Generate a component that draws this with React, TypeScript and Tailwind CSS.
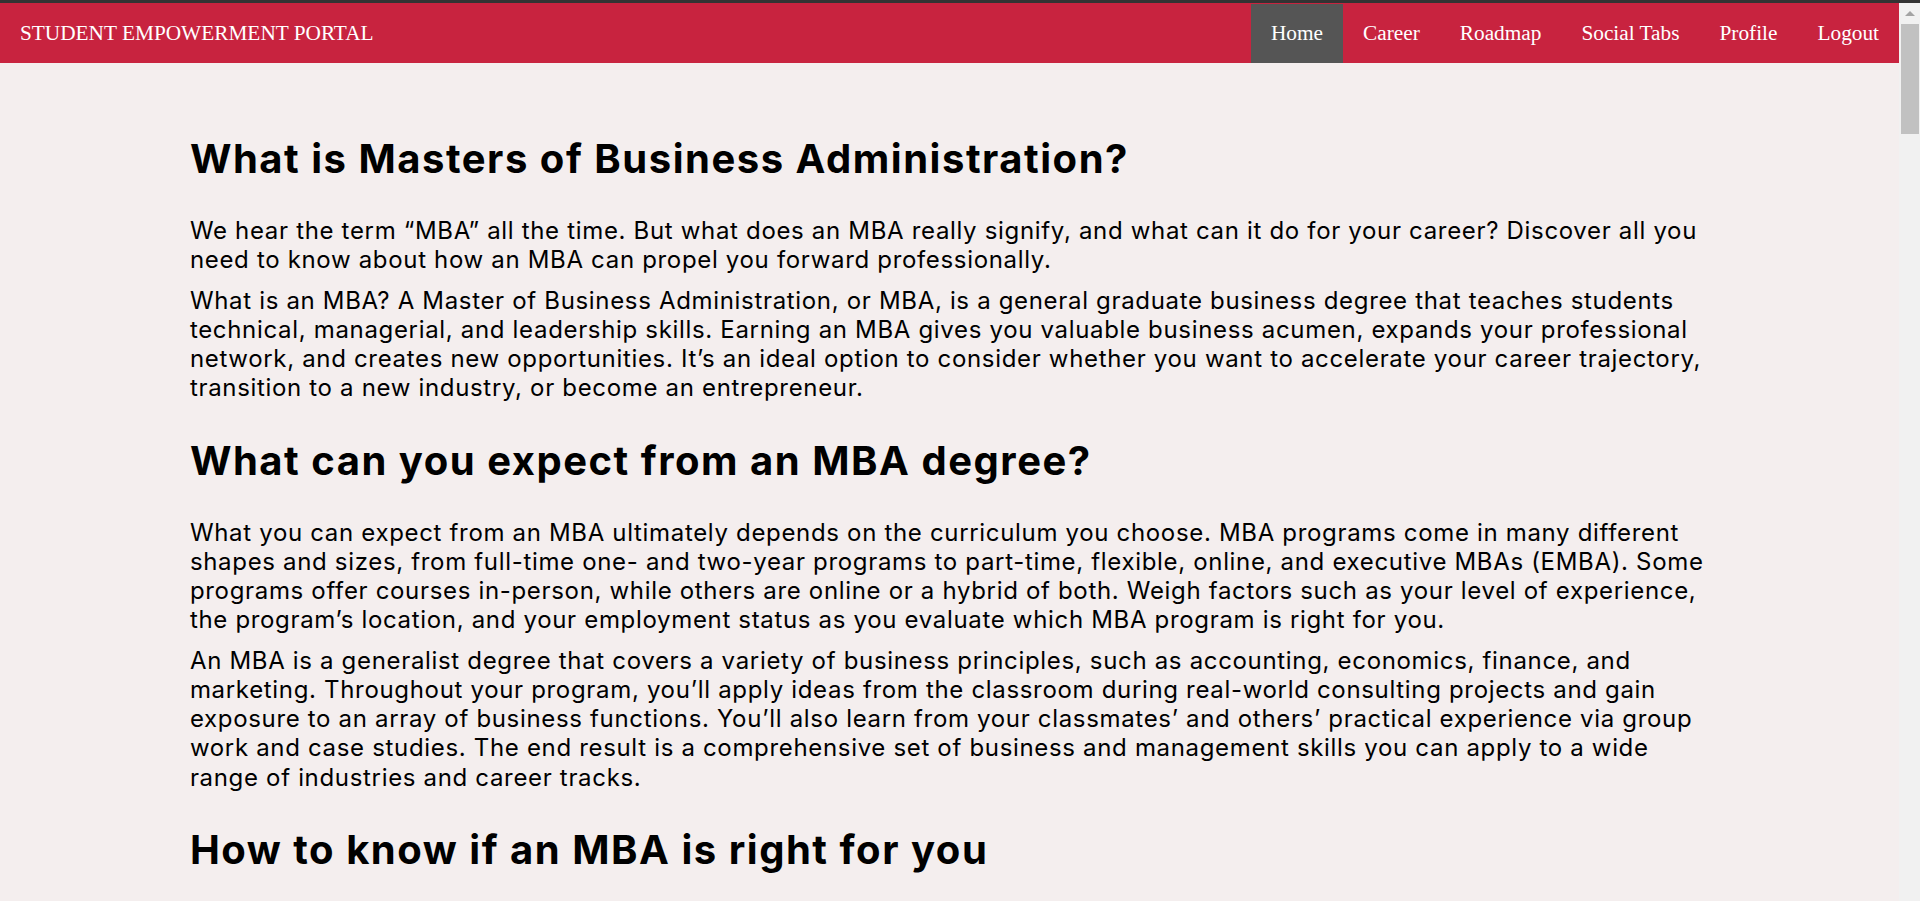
const navItems = ['Home', 'Career', 'Roadmap', 'Social Tabs', 'Profile', 'Logout']

const sections = [
  {
    title: 'What is Masters of Business Administration?',
    paragraphs: [
      'We hear the term “MBA” all the time. But what does an MBA really signify, and what can it do for your career? Discover all you need to know about how an MBA can propel you forward professionally.',
      'What is an MBA? A Master of Business Administration, or MBA, is a general graduate business degree that teaches students technical, managerial, and leadership skills. Earning an MBA gives you valuable business acumen, expands your professional network, and creates new opportunities. It’s an ideal option to consider whether you want to accelerate your career trajectory, transition to a new industry, or become an entrepreneur.',
    ],
  },
  {
    title: 'What can you expect from an MBA degree?',
    paragraphs: [
      'What you can expect from an MBA ultimately depends on the curriculum you choose. MBA programs come in many different shapes and sizes, from full-time one- and two-year programs to part-time, flexible, online, and executive MBAs (EMBA). Some programs offer courses in-person, while others are online or a hybrid of both. Weigh factors such as your level of experience, the program’s location, and your employment status as you evaluate which MBA program is right for you.',
      'An MBA is a generalist degree that covers a variety of business principles, such as accounting, economics, finance, and marketing. Throughout your program, you’ll apply ideas from the classroom during real-world consulting projects and gain exposure to an array of business functions. You’ll also learn from your classmates’ and others’ practical experience via group work and case studies. The end result is a comprehensive set of business and management skills you can apply to a wide range of industries and career tracks.',
    ],
  },
  {
    title: 'How to know if an MBA is right for you',
    paragraphs: [],
  },
]

function Navbar() {
  return (
    <nav className="flex h-[60px] items-center justify-between bg-[#c8233f] pt-[1px] font-['Liberation_Serif',serif] text-[21.3px] text-white">
      <span className="pl-[20px]">STUDENT EMPOWERMENT PORTAL</span>
      <ul className="flex h-full">
        {navItems.map((item, i) => (
          <li
            key={item}
            className={`flex h-full items-center px-[20px] ${i === 0 ? 'bg-[#555555]' : ''}`}
          >
            {item}
          </li>
        ))}
      </ul>
    </nav>
  )
}

function Scrollbar() {
  return (
    <div className="flex w-[21px] shrink-0 flex-col bg-[#f1f1f1]">
      <div className="flex h-[21px] items-center justify-center">
        <div className="h-0 w-0 border-x-[5px] border-b-[5px] border-x-transparent border-b-[#a3a3a3]" />
      </div>
      <div className="ml-[2px] mr-[1px] h-[110px] bg-[#c1c1c1]" />
    </div>
  )
}

export default function App() {
  return (
    <div className="flex h-screen flex-col overflow-hidden bg-[#333333]">
      <div className="h-[3px] shrink-0" />
      <div className="flex min-h-0 flex-1">
        <div className="min-w-0 flex-1 overflow-hidden bg-[#f4eeee]">
          <Navbar />
          <main className="mx-auto w-4/5 pt-[38px] font-['Inter',sans-serif] text-black">
            {sections.map((s) => (
              <section key={s.title}>
                <h2 className="my-[33px] text-[40px] leading-[49px] font-bold tracking-[0.038em]">
                  {s.title}
                </h2>
                <div className="flex flex-col gap-[11px]">
                  {s.paragraphs.map((p) => (
                    <p key={p.slice(0, 20)} className="text-[24px] leading-[29.25px] tracking-[0.028em]">
                      {p}
                    </p>
                  ))}
                </div>
              </section>
            ))}
          </main>
        </div>
        <Scrollbar />
      </div>
    </div>
  )
}
